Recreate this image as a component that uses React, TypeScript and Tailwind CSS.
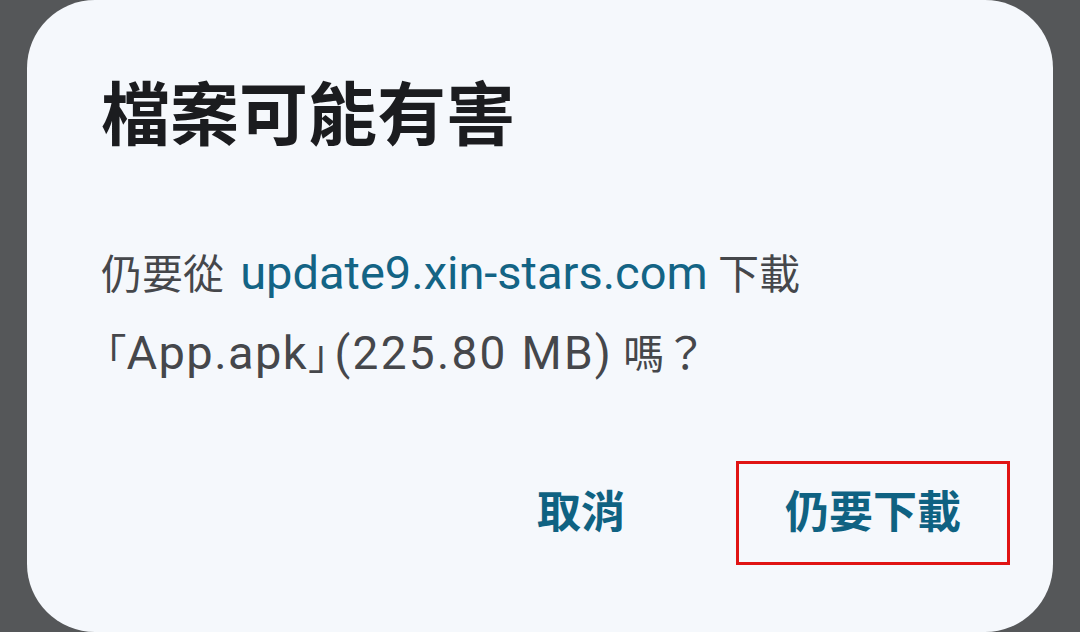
export default function App() {
  return (
    <div className="flex h-[632px] w-[1080px] justify-center overflow-hidden bg-[#555759] px-[27px]">
      <div
        className="flex h-[632px] w-full flex-col rounded-[68px] bg-[#f5f8fc] pl-[74px] pr-[43px] pt-[74px]"
        style={{ fontFamily: '"Roboto", "Noto Sans CJK TC", sans-serif' }}
      >
        {/* Title */}
        <h1 className="text-[69px] font-bold leading-[86px] text-[#1b1c1f]">
          檔案可能有害
        </h1>

        {/* Message: latin runs are set larger than the CJK runs */}
        <p className="mt-[74px] text-[41px] leading-[77px] text-[#45474b]">
          仍要從{" "}
          <span className="ml-[6px] text-[47px] text-[#136485]">update9.xin-stars.com</span>{" "}
          下載
          <br />
          <span className="ml-[5px] [font-feature-settings:'halt']">「</span>
          <span className="text-[47px] tracking-[0.03em]">App.apk</span>
          <span className="[font-feature-settings:'halt']">」</span>
          <span className="ml-[6px] text-[46px] tracking-[0.05em]">(225.80 MB)</span> 嗎
          <span className="text-[43px]">？</span>
        </p>

        {/* Actions */}
        <div className="mt-[67px] flex items-center justify-end gap-[64px]">
          <button className="px-[47px] py-[28px] text-[44px] font-bold leading-[48px] text-[#0f6282]">
            取消
          </button>
          <button className="border-[3px] border-[#e01414] px-[46px] py-[25px] text-[44px] font-bold leading-[48px] text-[#0f6282]">
            仍要下載
          </button>
        </div>
      </div>
    </div>
  );
}
